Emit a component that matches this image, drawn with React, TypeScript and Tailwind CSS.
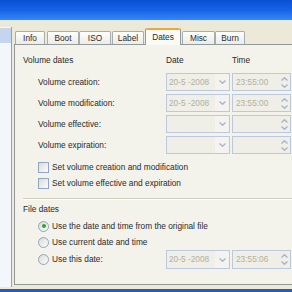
import React from "react";

const Chevron = ({ up = false }: { up?: boolean }) => (
  <svg width="7" height="4" viewBox="0 0 7 4">
    <path
      d={up ? "M0.5 3.5 L3.5 0.7 L6.5 3.5" : "M0.5 0.5 L3.5 3.3 L6.5 0.5"}
      fill="none"
      stroke="#A7B5CB"
      strokeWidth="1.3"
    />
  </svg>
);

function DateBox({ value }: { value?: string }) {
  return (
    <div className="w-[64px] h-full border border-[#BCC8DB] bg-[#EFEEE7] flex items-center">
      <span className="flex-1 pl-[2px] text-[#B3B0A1] whitespace-pre">{value}</span>
      <div className="w-[14px] h-full flex items-center justify-center bg-[#F4F3EF]">
        <Chevron />
      </div>
    </div>
  );
}

function TimeBox({ value }: { value?: string }) {
  return (
    <div className="w-[59px] h-full border border-[#BCC8DB] bg-[#EFEEE7] flex items-center">
      <span className="flex-1 pl-[3px] text-[#B3B0A1]">{value}</span>
      <div className="w-[10px] h-full flex flex-col items-center justify-center gap-[3px] mr-[1px]">
        <Chevron up />
        <Chevron />
      </div>
    </div>
  );
}

function Checkbox({ label }: { label: string }) {
  return (
    <div className="h-[16px] flex items-center pl-[15px]">
      <div className="w-[11px] h-[11px] border border-[#8FA6C6] bg-gradient-to-br from-[#DCDCD6] to-[#FBFBF9]" />
      <span className="ml-[3px]">{label}</span>
    </div>
  );
}

function Radio({ label, checked = false }: { label: string; checked?: boolean }) {
  return (
    <div className="flex items-center pl-[15px]">
      <div className="w-[11px] h-[11px] rounded-full border border-[#8FA6C6] bg-gradient-to-br from-[#DCDCD6] to-[#FBFBF9] flex items-center justify-center">
        {checked && <div className="w-[4px] h-[4px] rounded-full bg-[#2FA32F]" />}
      </div>
      <span className="ml-[3px]">{label}</span>
    </div>
  );
}

function Tab({ label, w, selected = false }: { label: string; w: string; selected?: boolean }) {
  if (selected) {
    return (
      <div
        className={`${w} h-[17px] -mb-[1px] relative z-10 bg-[#FAFAF7] border-x border-[#919B9C] rounded-t-[2px] flex flex-col`}
      >
        <div className="h-[2px] bg-[#F2A53A] rounded-t-[2px]" />
        <div className="flex-1 flex items-center justify-center pb-[1px]">{label}</div>
      </div>
    );
  }
  return (
    <div
      className={`${w} h-[13px] border-x border-t border-[#A5ADAE] rounded-t-[2px] bg-gradient-to-b from-[#FEFEFE] to-[#ECEBE4] flex items-center justify-center`}
    >
      {label}
    </div>
  );
}

export default function App() {
  return (
    <div className="w-[292px] h-[292px] overflow-hidden bg-[#ECE9D8] flex flex-col font-['Liberation_Sans',Arial,sans-serif] text-[8.3px] text-[#2a2a2a] leading-none">
      <div className="h-[20px] shrink-0 bg-gradient-to-b from-[#0A50D2] via-[#1563E6] to-[#3A86F2]" />
      <div className="flex-1 flex min-h-0">
        <div className="w-[12px] mt-[7px] mb-[2px] bg-[#F3F6FB] border-r border-[#8EA3C0] flex flex-col">
          <div className="mt-[1px] h-[15px] bg-[#C5D5EF]" />
        </div>
        <div className="ml-[2px] flex-1 flex flex-col pt-[8px] pb-[4px] min-w-0">
          <div className="h-[16px] flex items-end pl-[1px] shrink-0">
            <Tab label="Info" w="w-[30px]" />
            <div className="w-[2px]" />
            <Tab label="Boot" w="w-[32px]" />
            <Tab label="ISO" w="w-[32px]" />
            <div className="w-[1px]" />
            <Tab label="Label" w="w-[32px]" />
            <div className="w-[1px]" />
            <Tab label="Dates" w="w-[36px]" selected />
            <div className="w-[1px]" />
            <Tab label="Misc" w="w-[33px]" />
            <Tab label="Burn" w="w-[30px]" />
          </div>
          <div className="flex-1 border-l border-y border-[#919B9C] bg-[#F3F2EB] flex flex-col pl-[8px]">
            <div className="mt-[9px] h-[12px] flex items-center">
              <span className="w-[143px]">Volume dates</span>
              <span className="w-[66px]">Date</span>
              <span>Time</span>
            </div>
            <div className="mt-[7px] flex flex-col gap-[3px]">
              {[
                ["Volume creation:", "20-5 -2008", "23:55:00"],
                ["Volume modification:", "20-5 -2008", "23:55:00"],
                ["Volume effective:", "", ""],
                ["Volume expiration:", "", ""],
              ].map(([l, d, t]) => (
                <div key={l} className="h-[18px] flex items-center">
                  <span className="w-[143px] pl-[15px]">{l}</span>
                  <DateBox value={d} />
                  <div className="w-[2px]" />
                  <TimeBox value={t} />
                </div>
              ))}
            </div>
            <div className="mt-[5px] flex flex-col">
              <Checkbox label="Set volume creation and modification" />
              <Checkbox label="Set volume effective and expiration" />
            </div>
            <div className="mt-[7px] h-[1px] bg-[#D0CEBF]" />
            <div className="h-[1px] bg-[#FFFFFF]" />
            <div className="mt-[3px] h-[12px] flex items-center">File dates</div>
            <div className="mt-[3px] flex flex-col">
              <div className="h-[16px] flex items-center">
                <Radio label="Use the date and time from the original file" checked />
              </div>
              <div className="h-[16px] flex items-center">
                <Radio label="Use current date and time" />
              </div>
              <div className="h-[19px] flex items-center">
                <div className="w-[143px]">
                  <Radio label="Use this date:" />
                </div>
                <DateBox value="20-5 -2008" />
                <div className="w-[2px]" />
                <TimeBox value="23:55:06" />
              </div>
            </div>
          </div>
        </div>
      </div>
      <div className="h-[3px] shrink-0 bg-[#1E5CD6]" />
    </div>
  );
}
